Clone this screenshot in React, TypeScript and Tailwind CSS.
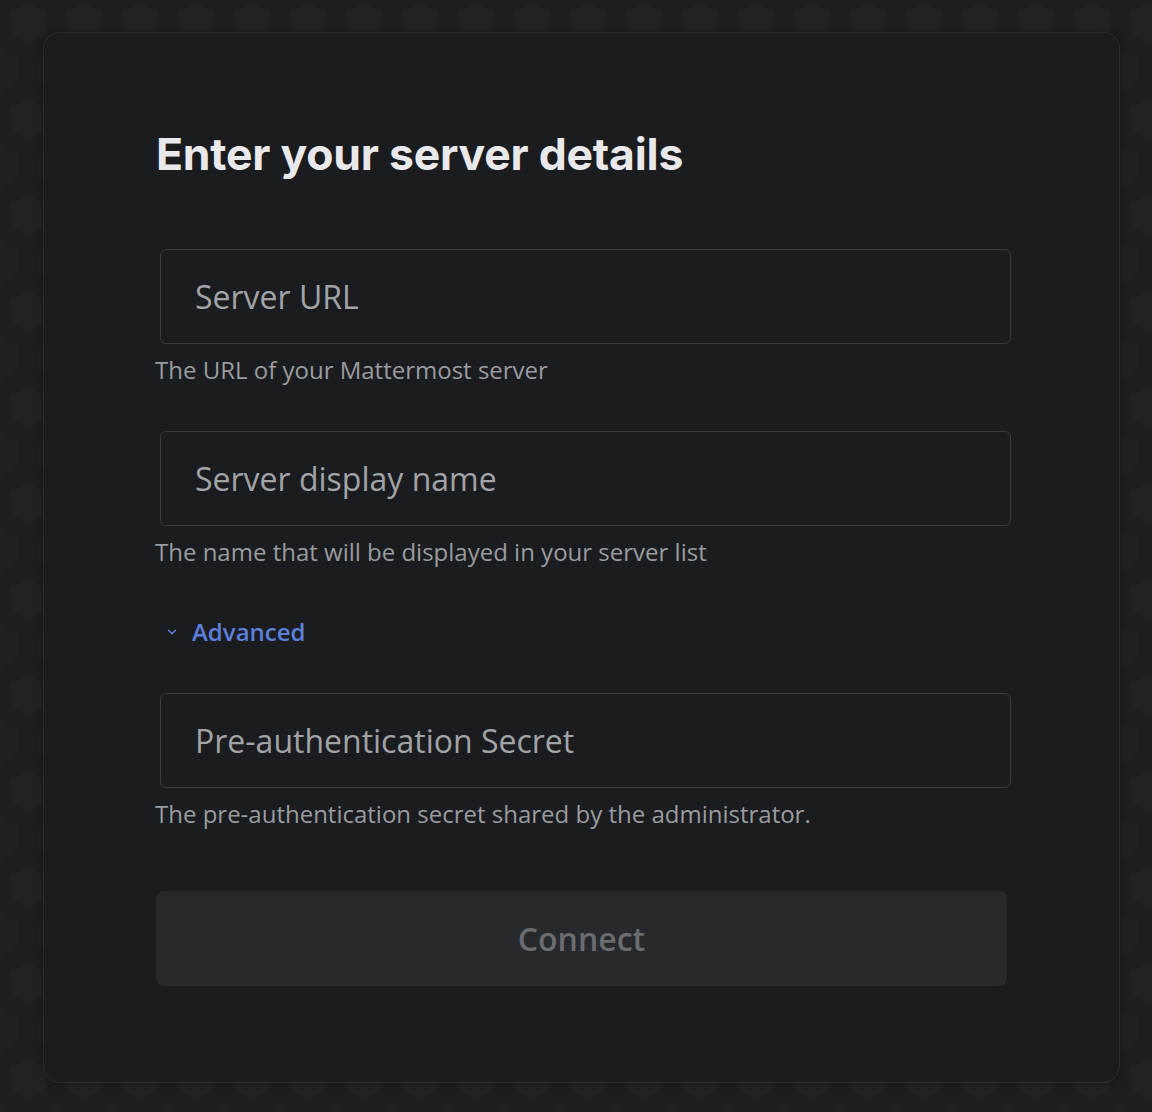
import { ChevronDown } from "lucide-react";

const inputClass =
  "w-[851px] h-[95px] ml-[4px] rounded-[6px] border border-[#3a3b3f] bg-[#1b1c1f] px-[34px] text-[32px] text-[#d8d8da] placeholder:text-[#a2a3a6] outline-none";

const helperClass = "mt-[11px] -ml-px text-[24px] leading-[30px] text-[#9a9b9e]";

function HexBackground() {
  // faint honeycomb behind the card
  return (
    <svg className="absolute inset-0 h-full w-full" xmlns="http://www.w3.org/2000/svg">
      <defs>
        <pattern id="hex" width="56" height="96" patternUnits="userSpaceOnUse">
          <polygon points="28,2 46,12 46,34 28,44 10,34 10,12" fill="#212225" />
          <polygon points="0,50 18,60 18,82 0,92 -18,82 -18,60" fill="#202124" />
          <polygon points="56,50 74,60 74,82 56,92 38,82 38,60" fill="#202124" />
        </pattern>
      </defs>
      <rect width="100%" height="100%" fill="url(#hex)" />
    </svg>
  );
}

export default function App() {
  return (
    <div
      className="relative h-[1112px] w-full overflow-hidden bg-[#1d1e21]"
      style={{ fontFamily: '"Open Sans", "Noto Sans", sans-serif' }}
    >
      <HexBackground />
      <div className="relative pt-[32px] pl-[43px]">
        <div className="w-[1077px] rounded-[16px] border border-[#2c2d31] bg-[#1b1c1f] pt-[94px] pb-[96px] pl-[112px] shadow-[0_0_6px_rgba(0,0,0,0.35)]">
          <h1
            className="text-[44.5px] font-bold leading-[54px] tracking-[-0.005em] text-[#e9e9eb]"
            style={{ fontFamily: 'Inter, "Noto Sans", sans-serif' }}
          >
            Enter your server details
          </h1>

          <div className="mt-[68px]">
            <input className={inputClass} placeholder="Server URL" />
            <p className={helperClass}>The URL of your Mattermost server</p>
          </div>

          <div className="mt-[46px]">
            <input className={inputClass} placeholder="Server display name" />
            <p className={helperClass}>The name that will be displayed in your server list</p>
          </div>

          <button className="mt-[50px] ml-[9px] flex h-[30px] items-center gap-[13px] text-[24px] font-semibold text-[#5b7fdb]">
            <ChevronDown size={14} strokeWidth={2.5} />
            Advanced
          </button>

          <div className="mt-[46px]">
            <input className={inputClass} placeholder="Pre-authentication Secret" />
            <p className={helperClass}>The pre-authentication secret shared by the administrator.</p>
          </div>

          <button
            disabled
            className="mt-[62px] flex h-[95px] w-[851px] items-center justify-center rounded-[8px] bg-[#28292c] text-[32px] font-semibold text-[#6b6c70]"
          >
            Connect
          </button>
        </div>
      </div>
    </div>
  );
}
